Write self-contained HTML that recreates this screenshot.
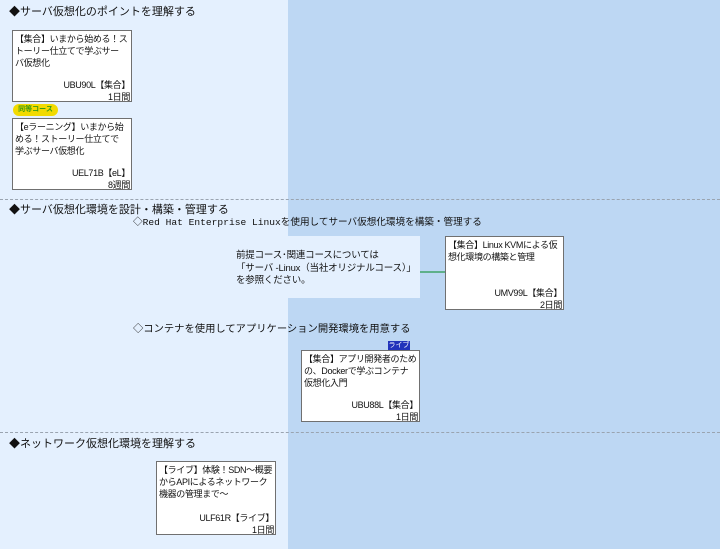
<!DOCTYPE html>
<html><head><meta charset="utf-8"><style>
*{margin:0;padding:0;box-sizing:border-box}
body{width:720px;height:549px;position:relative;overflow:hidden;background:#bdd7f3;font-family:"Liberation Sans","Noto Sans CJK JP",sans-serif;color:#111}
.l{position:absolute;left:0;top:0;width:288px;height:549px;background:#e4f0fe}
.sep{position:absolute;left:0;width:720px;border-top:1px dashed #9aa4b0;height:0}
.h{position:absolute;font-size:11px;white-space:nowrap;line-height:14px}
.s{position:absolute;font-size:10.3px;white-space:nowrap;line-height:13px}
.c{position:absolute;background:#fff;border:1px solid #707070;font-size:9px;line-height:12px;padding:2px 1px 0 2px;white-space:nowrap;letter-spacing:-0.35px}
.c .t{height:46px;overflow:hidden}
.c .r{text-align:right;line-height:12px}
.note{position:absolute;left:219px;top:236px;width:201px;height:62px;background:#e4f0fe;font-size:9.5px;line-height:12.5px;padding:14px 0 0 17px;white-space:nowrap;letter-spacing:-0.2px}
</style></head><body>
<div class="l"></div>
<div class="sep" style="top:199px"></div>
<div class="sep" style="top:432px"></div>

<div class="h" style="left:9px;top:5px">◆サーバ仮想化のポイントを理解する</div>
<div class="c" style="left:12px;top:30px;width:120px;height:72px"><div class="t">【集合】いまから始める！ス<br>トーリー仕立てで学ぶサー<br>バ仮想化</div><div class="r">UBU90L【集合】</div><div class="r">1日間</div></div>
<div style="position:absolute;left:13px;top:104px;width:45px;height:12px;border-radius:6px;background:#f2da00;color:#3a9a10;font-size:7px;line-height:12px;text-align:center;font-weight:bold">同等コース</div>
<div class="c" style="left:12px;top:118px;width:120px;height:72px"><div class="t">【eラーニング】いまから始<br>める！ストーリー仕立てで<br>学ぶサーバ仮想化</div><div class="r">UEL71B【eL】</div><div class="r">8週間</div></div>

<div class="h" style="left:9px;top:203px">◆サーバ仮想化環境を設計・構築・管理する</div>
<div class="s" style="left:133px;top:216px;font-family:'Liberation Mono','Noto Sans CJK JP',monospace;font-size:9.6px">◇Red Hat Enterprise Linuxを使用してサーバ仮想化環境を構築・管理する</div>
<div class="note">前提コース･関連コースについては<br>「サーバ -Linux（当社オリジナルコース）」<br>を参照ください。</div>
<div style="position:absolute;left:420px;top:271px;width:25px;height:2px;background:#5fb08a"></div>
<div class="c" style="left:445px;top:236px;width:119px;height:74px"><div class="t" style="height:48px">【集合】Linux KVMによる仮<br>想化環境の構築と管理</div><div class="r">UMV99L【集合】</div><div class="r">2日間</div></div>

<div class="s" style="left:133px;top:323px">◇コンテナを使用してアプリケーション開発環境を用意する</div>
<div style="position:absolute;left:388px;top:341px;width:22px;height:9px;background:#2233bb;color:#fff;font-size:7px;line-height:9px;text-align:center">ライブ</div>
<div class="c" style="left:301px;top:350px;width:119px;height:72px"><div class="t">【集合】アプリ開発者のため<br>の、Dockerで学ぶコンテナ<br>仮想化入門</div><div class="r">UBU88L【集合】</div><div class="r">1日間</div></div>

<div class="h" style="left:9px;top:437px">◆ネットワーク仮想化環境を理解する</div>
<div class="c" style="left:156px;top:461px;width:120px;height:74px"><div class="t" style="height:48px">【ライブ】体験！SDN～概要<br>からAPIによるネットワーク<br>機器の管理まで～</div><div class="r">ULF61R【ライブ】</div><div class="r">1日間</div></div>
</body></html>
